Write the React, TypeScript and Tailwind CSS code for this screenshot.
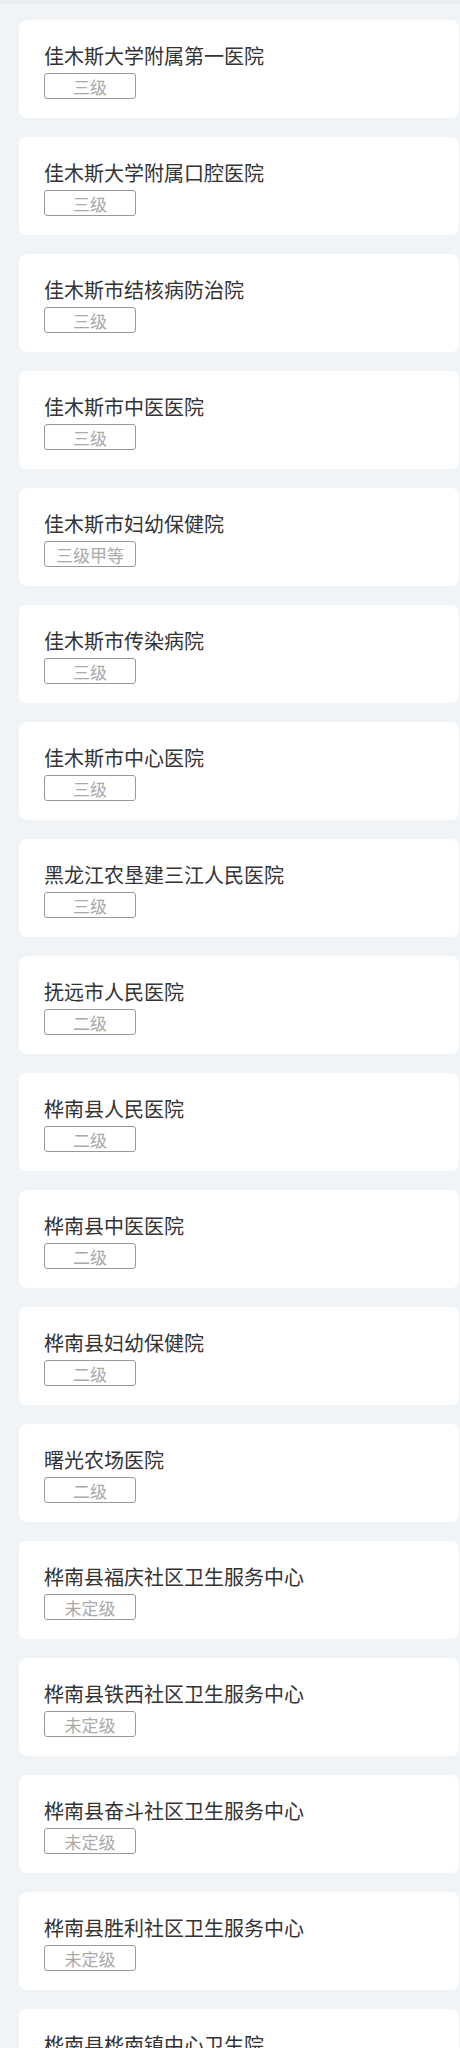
const hospitals: { name: string; level: string }[] = [
  { name: '佳木斯大学附属第一医院', level: '三级' },
  { name: '佳木斯大学附属口腔医院', level: '三级' },
  { name: '佳木斯市结核病防治院', level: '三级' },
  { name: '佳木斯市中医医院', level: '三级' },
  { name: '佳木斯市妇幼保健院', level: '三级甲等' },
  { name: '佳木斯市传染病院', level: '三级' },
  { name: '佳木斯市中心医院', level: '三级' },
  { name: '黑龙江农垦建三江人民医院', level: '三级' },
  { name: '抚远市人民医院', level: '二级' },
  { name: '桦南县人民医院', level: '二级' },
  { name: '桦南县中医医院', level: '二级' },
  { name: '桦南县妇幼保健院', level: '二级' },
  { name: '曙光农场医院', level: '二级' },
  { name: '桦南县福庆社区卫生服务中心', level: '未定级' },
  { name: '桦南县铁西社区卫生服务中心', level: '未定级' },
  { name: '桦南县奋斗社区卫生服务中心', level: '未定级' },
  { name: '桦南县胜利社区卫生服务中心', level: '未定级' },
  { name: '桦南县桦南镇中心卫生院', level: '未定级' },
];

export default function App() {
  return (
    <div
      className="min-h-screen bg-[#f0f4f7]"
      style={{ fontFamily: '"Noto Sans CJK SC", "Noto Sans", sans-serif' }}
    >
      <div className="h-[4px] bg-[#e9eef1]" />
      <ul className="flex flex-col gap-[19px] pt-[16px] pl-[19px] pr-[1px] pb-[20px]">
        {hospitals.map((h) => (
          <li key={h.name} className="bg-white rounded-[8px] px-[25px] pt-[22px] pb-[19px]">
            <h3 className="text-[20px] leading-[28px] text-[#333]">{h.name}</h3>
            <div className="mt-[3px] w-[92px] h-[26px] border border-[#999] rounded-[3px] flex items-center justify-center text-[17px] leading-none text-[#aaa]">
              {h.level}
            </div>
          </li>
        ))}
      </ul>
    </div>
  );
}
